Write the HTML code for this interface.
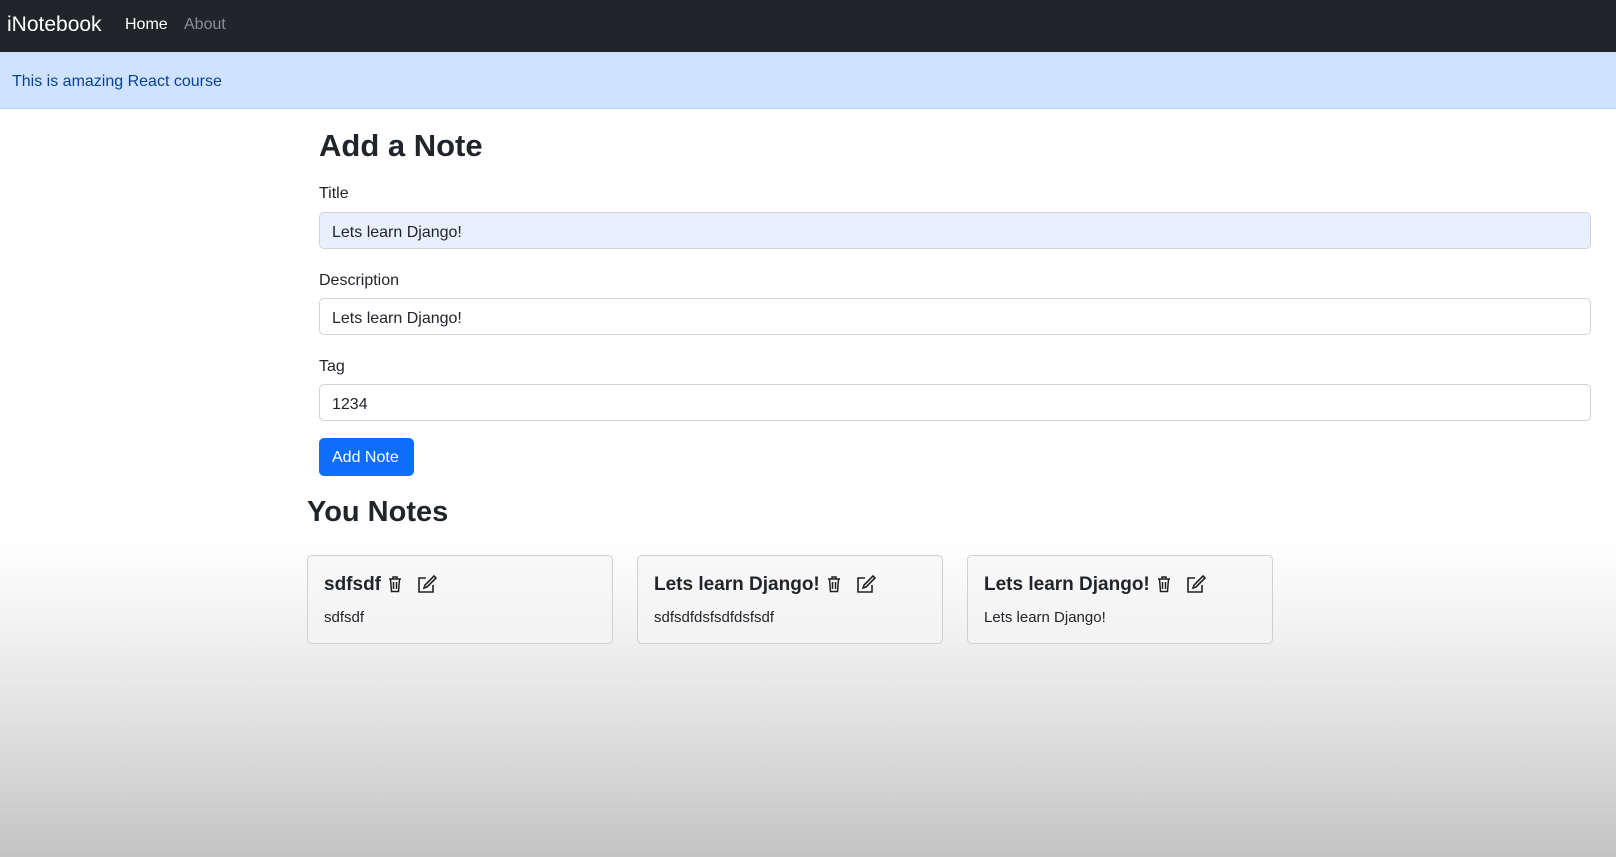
<!DOCTYPE html>
<html><head><meta charset="utf-8"><style>
*{box-sizing:border-box;margin:0;padding:0}
body{width:1616px;height:857px;overflow:hidden;font-family:"Liberation Sans",sans-serif;color:#212529;position:relative;
background:linear-gradient(to bottom,#fff 0,#fff 540px,#f0f0f0 640px,#d8d8d8 760px,#c4c4c4 857px)}
.abs{position:absolute}
nav{position:absolute;left:0;top:0;width:1616px;height:52px;background:#212529}
.alert{position:absolute;left:0;top:52px;width:1616px;height:57px;background:#cfe2ff;border-bottom:1px solid #b6d4fe;color:#084298;font-size:16px;padding:21px 0 0 12px}
label{position:absolute;left:319px;font-size:16px}
.inp{position:absolute;left:319px;width:1272px;height:37px;border:1px solid #ced4da;border-radius:5px;background:#fff;font-size:16px;padding:11px 0 0 12px}
.card{position:absolute;top:555px;width:306px;height:89px;border:1px solid #d0d0d0;border-radius:5px;background:rgba(245,245,245,.6)}
.card h5{position:absolute;left:16px;top:18px;font-size:19px;font-weight:bold;white-space:nowrap}
.card p{position:absolute;left:16px;top:53px;font-size:15px}
.card svg{vertical-align:-3px;margin-left:6px}
</style></head><body>
<nav>
<div class="abs" style="left:7px;top:13px;font-size:21px;color:#fff">iNotebook</div>
<div class="abs" style="left:125px;top:16px;font-size:16px;color:#fff">Home</div>
<div class="abs" style="left:184px;top:16px;font-size:16px;color:#8c8f92">About</div>
</nav>
<div class="alert">This is amazing React course</div>
<div class="abs" style="left:319px;top:128px;font-size:31px;font-weight:bold">Add a Note</div>
<label style="top:185px">Title</label>
<div class="inp" style="top:212px;background:#e8f0fe">Lets learn Django!</div>
<label style="top:272px">Description</label>
<div class="inp" style="top:298px">Lets learn Django!</div>
<label style="top:358px">Tag</label>
<div class="inp" style="top:384px">1234</div>
<div class="abs" style="left:319px;top:438px;width:95px;height:38px;background:#0d6efd;border-radius:5px;color:#fff;font-size:16px;padding:11px 0 0 13px">Add Note</div>
<div class="abs" style="left:307px;top:496px;font-size:29px;font-weight:bold">You Notes</div>
<div class="card" style="left:307px"><h5>sdfsdf<svg width="16" height="18" viewBox="0 0 16 18"><path d="M2 4h12M6 4V2h4v2M3.5 4l1 12.5h7l1-12.5M6.5 7v7M9.5 7v7" fill="none" stroke="#222" stroke-width="1.5"/></svg><svg width="20" height="18" viewBox="0 0 20 18" style="margin-left:14px"><path d="M9 3H2v14h14v-7M17 1l2 2-9 9-3 1 1-3z" fill="none" stroke="#222" stroke-width="1.6"/></svg></h5><p>sdfsdf</p></div>
<div class="card" style="left:637px"><h5>Lets learn Django!<svg width="16" height="18" viewBox="0 0 16 18"><path d="M2 4h12M6 4V2h4v2M3.5 4l1 12.5h7l1-12.5M6.5 7v7M9.5 7v7" fill="none" stroke="#222" stroke-width="1.5"/></svg><svg width="20" height="18" viewBox="0 0 20 18" style="margin-left:14px"><path d="M9 3H2v14h14v-7M17 1l2 2-9 9-3 1 1-3z" fill="none" stroke="#222" stroke-width="1.6"/></svg></h5><p>sdfsdfdsfsdfdsfsdf</p></div>
<div class="card" style="left:967px"><h5>Lets learn Django!<svg width="16" height="18" viewBox="0 0 16 18"><path d="M2 4h12M6 4V2h4v2M3.5 4l1 12.5h7l1-12.5M6.5 7v7M9.5 7v7" fill="none" stroke="#222" stroke-width="1.5"/></svg><svg width="20" height="18" viewBox="0 0 20 18" style="margin-left:14px"><path d="M9 3H2v14h14v-7M17 1l2 2-9 9-3 1 1-3z" fill="none" stroke="#222" stroke-width="1.6"/></svg></h5><p>Lets learn Django!</p></div>
</body></html>
